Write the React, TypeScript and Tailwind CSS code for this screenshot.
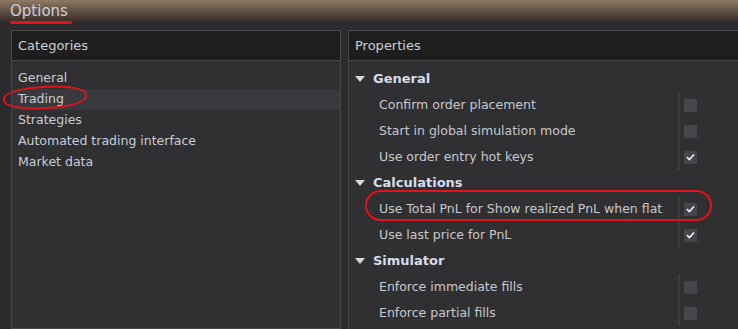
import React from 'react';

// Options dialog – Trading category

const categories = ['General', 'Trading', 'Strategies', 'Automated trading interface', 'Market data'];

interface Prop {
  label: string;
  checked: boolean;
}

interface Section {
  title: string;
  items: Prop[];
}

const sections: Section[] = [
  {
    title: 'General',
    items: [
      { label: 'Confirm order placement', checked: false },
      { label: 'Start in global simulation mode', checked: false },
      { label: 'Use order entry hot keys', checked: true },
    ],
  },
  {
    title: 'Calculations',
    items: [
      { label: 'Use Total PnL for Show realized PnL when flat', checked: true },
      { label: 'Use last price for PnL', checked: true },
    ],
  },
  {
    title: 'Simulator',
    items: [
      { label: 'Enforce immediate fills', checked: false },
      { label: 'Enforce partial fills', checked: false },
    ],
  },
];

const CheckBox = ({ checked }: { checked: boolean }) => (
  <div className="w-[13px] h-[13px] bg-[#45454c] flex items-center justify-center">
    {checked && (
      <svg width="9" height="8" viewBox="0 0 9 8">
        <path d="M1 4.2 L3.4 6.5 L8 1.5" fill="none" stroke="#f0f0f0" strokeWidth="1.6" />
      </svg>
    )}
  </div>
);

const Caret = () => (
  <svg width="10" height="6" viewBox="0 0 10 6" className="shrink-0">
    <path d="M0 0 L10 0 L5 6 Z" fill="#d8d8dc" />
  </svg>
);

export default function App() {
  return (
    <div className="relative w-[738px] h-[329px] overflow-hidden bg-[#2b2b2e] font-['DejaVu_Sans',sans-serif]">
      {/* Title bar */}
      <div className="h-[22px] bg-gradient-to-b from-[#8e7b64] to-[#382c27] flex items-center pl-[10px]">
        <span className="text-[15px] leading-none text-[#cdd1da]">Options</span>
      </div>

      <div className="flex gap-[7px] pl-[11px] pt-[8px] h-[307px]">
        {/* Categories */}
        <div className="w-[330px] h-full border border-[#46464b] bg-[#303033] flex flex-col">
          <div className="h-[30px] shrink-0 bg-[#1e1e1e] border-b border-[#46464b] flex items-center px-[6px] text-[13px] text-[#ccd0d8]">
            Categories
          </div>
          <div className="pt-[7px] flex flex-col">
            {categories.map((c) => (
              <div
                key={c}
                className={`h-[21px] flex items-center px-[6px] text-[12.5px] text-[#c9cdd5] ${
                  c === 'Trading' ? 'bg-[#3a3a3e]' : ''
                }`}
              >
                {c}
              </div>
            ))}
          </div>
        </div>

        {/* Properties */}
        <div className="flex-1 h-full border-l border-t border-[#46464b] bg-[#303033] flex flex-col">
          <div className="h-[30px] shrink-0 bg-[#1e1e1e] border-b border-[#46464b] flex items-center px-[6px] text-[13px] text-[#ccd0d8]">
            Properties
          </div>
          <div className="pt-[5px] flex flex-col">
            {sections.map((s) => (
              <React.Fragment key={s.title}>
                <div className="h-[26px] flex items-center gap-[8px] pl-[6px]">
                  <Caret />
                  <span className="text-[13px] font-bold text-[#d6dcea]">{s.title}</span>
                </div>
                {s.items.map((it) => (
                  <div key={it.label} className="h-[26px] flex">
                    <div className="w-[329px] flex items-center pl-[30px] text-[12.5px] text-[#c8c8cc]">{it.label}</div>
                    <div className="flex-1 border-l-2 border-[#3c3c40] flex items-center pl-[4px]">
                      <CheckBox checked={it.checked} />
                    </div>
                  </div>
                ))}
              </React.Fragment>
            ))}
          </div>
        </div>
      </div>

      {/* Red annotations */}
      <div className="absolute left-[10px] top-[21px] w-[62px] h-[3px] bg-[#e0141b] rounded-full" />
      <div className="absolute left-[3px] top-[86px] w-[84px] h-[23px] border-2 border-[#e0141b] rounded-[45%] -rotate-3" />
      <div className="absolute left-[365px] top-[190px] w-[347px] h-[31px] border-[2.5px] border-[#e0141b] rounded-full" />
    </div>
  );
}
